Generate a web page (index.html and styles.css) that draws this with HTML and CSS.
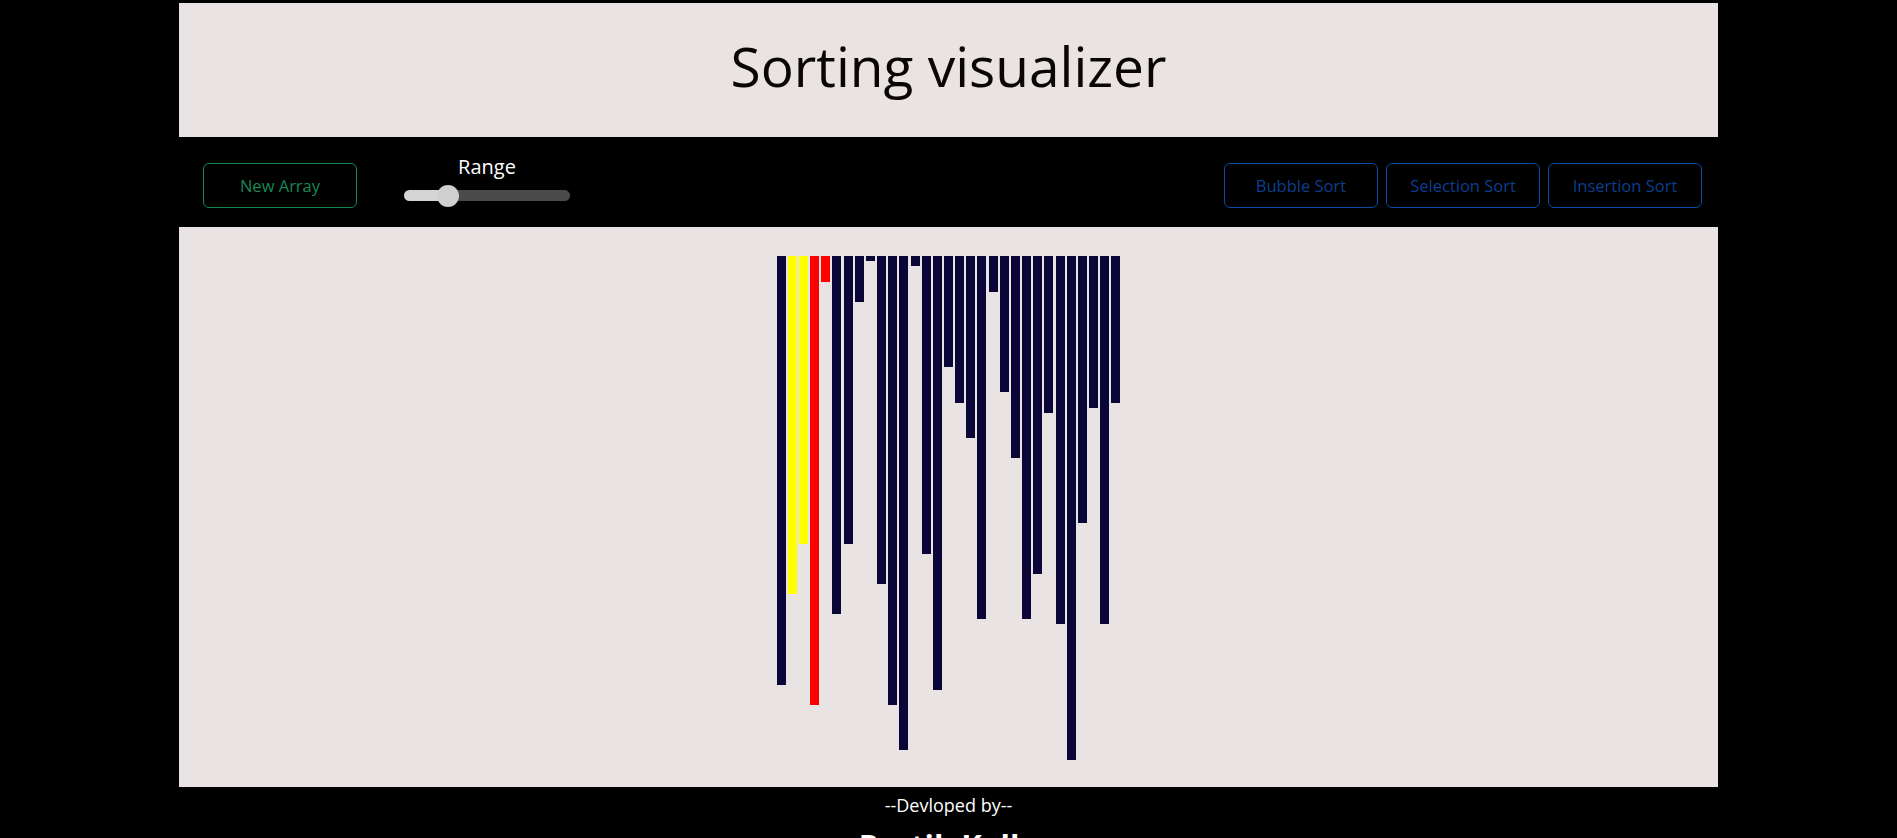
FILE: index.html
```html
<!DOCTYPE html>
<html lang="en">
<head>
<meta charset="utf-8">
<title>Sorting visualizer</title>
<link rel="stylesheet" href="styles.css">
</head>
<body>
<div class="app">
  <header class="title-box">
    <h1 class="title">Sorting visualizer</h1>
  </header>
  <div class="controls">
    <div class="controls-left">
      <button class="btn btn-green">New Array</button>
      <div class="range">
        <label class="range-label" for="size">Range</label>
        <input id="size" class="slider" type="range" min="0" max="100" value="23" style="--fill: 26%">
      </div>
    </div>
    <div class="controls-right">
      <button class="btn btn-blue">Bubble Sort</button>
      <button class="btn btn-blue">Selection Sort</button>
      <button class="btn btn-blue">Insertion Sort</button>
    </div>
  </div>
  <main class="bars-area">
    <div class="bars">
      <div class="bar" style="height:429px"></div>
      <div class="bar bar-yellow" style="height:338px"></div>
      <div class="bar bar-yellow" style="height:288px"></div>
      <div class="bar bar-red" style="height:449px"></div>
      <div class="bar bar-red" style="height:26px"></div>
      <div class="bar" style="height:358px"></div>
      <div class="bar" style="height:288px"></div>
      <div class="bar" style="height:46px"></div>
      <div class="bar" style="height:5px"></div>
      <div class="bar" style="height:328px"></div>
      <div class="bar" style="height:449px"></div>
      <div class="bar" style="height:494px"></div>
      <div class="bar" style="height:10px"></div>
      <div class="bar" style="height:298px"></div>
      <div class="bar" style="height:434px"></div>
      <div class="bar" style="height:111px"></div>
      <div class="bar" style="height:147px"></div>
      <div class="bar" style="height:182px"></div>
      <div class="bar" style="height:363px"></div>
      <div class="bar" style="height:36px"></div>
      <div class="bar" style="height:136px"></div>
      <div class="bar" style="height:202px"></div>
      <div class="bar" style="height:363px"></div>
      <div class="bar" style="height:318px"></div>
      <div class="bar" style="height:157px"></div>
      <div class="bar" style="height:368px"></div>
      <div class="bar" style="height:504px"></div>
      <div class="bar" style="height:267px"></div>
      <div class="bar" style="height:152px"></div>
      <div class="bar" style="height:368px"></div>
      <div class="bar" style="height:147px"></div>
    </div>
  </main>
  <footer class="footer">
    <p class="footer-line">--Devloped by--</p>
    <h3 class="footer-name">Pratik Kalla</h3>
  </footer>
</div>
</body>
</html>
```
FILE: styles.css
```css
html, body {
  margin: 0;
  padding: 0;
  background: #000;
  overflow: hidden;
}

body {
  font-family: "Open Sans", "Noto Sans", sans-serif;
  color: #fff;
}

.app {
  width: 1539px;
  margin: 0 auto;
  padding-top: 3px;
}

.title-box {
  background: #e9e3e3;
  height: 134px;
  display: flex;
  align-items: center;
  justify-content: center;
}

.title {
  margin: 0;
  font-weight: 400;
  font-size: 55px;
  color: #0a0606;
  line-height: 1;
  padding-bottom: 9px;
}

.controls {
  height: 90px;
  display: flex;
  align-items: flex-end;
  justify-content: space-between;
  padding: 0 16px 19px 24px;
  box-sizing: border-box;
}

.controls-left {
  display: flex;
  align-items: flex-end;
  gap: 47px;
}

.controls-right {
  display: flex;
  gap: 8px;
}

.btn {
  width: 154px;
  height: 45px;
  background: transparent;
  border: 1px solid;
  border-radius: 6px;
  font-family: "Open Sans", "Noto Sans", sans-serif;
  font-size: 16.5px;
  padding: 0 0 1px;
  cursor: pointer;
}

.btn-green {
  color: #198754;
  border-color: #198754;
}

.btn-blue {
  color: #0c3d8f;
  border-color: #0b4aa6;
}

.range {
  display: flex;
  flex-direction: column;
  align-items: center;
  width: 166px;
  padding-bottom: 7px;
}

.range-label {
  font-size: 20px;
  line-height: 24px;
  color: #fff;
  margin-bottom: 11px;
}

.slider {
  -webkit-appearance: none;
  appearance: none;
  width: 166px;
  height: 11px;
  margin: 0;
  border-radius: 6px;
  background: linear-gradient(to right, #d4d4d4 0 var(--fill), #4b4b4b var(--fill) 100%);
  outline: none;
}

.slider::-webkit-slider-thumb {
  -webkit-appearance: none;
  appearance: none;
  width: 22px;
  height: 22px;
  border-radius: 50%;
  background: #cfcfcf;
  border: none;
}

.bars-area {
  background: #e9e3e3;
  height: 560px;
  display: flex;
  justify-content: center;
  align-items: flex-start;
  padding-top: 29px;
  box-sizing: border-box;
}

.bars {
  display: flex;
  align-items: flex-start;
  gap: 2.17px;
}

.bar {
  width: 9px;
  background: #0a0638;
}

.bar-yellow {
  background: #ffff00;
}

.bar-red {
  background: #ff0000;
}

.footer {
  text-align: center;
  padding-top: 5px;
}

.footer-line {
  margin: 0;
  font-size: 18px;
  line-height: 26px;
}

.footer-name {
  margin: 8px 0 0;
  font-size: 31px;
  font-weight: 700;
  line-height: 38px;
}
```
